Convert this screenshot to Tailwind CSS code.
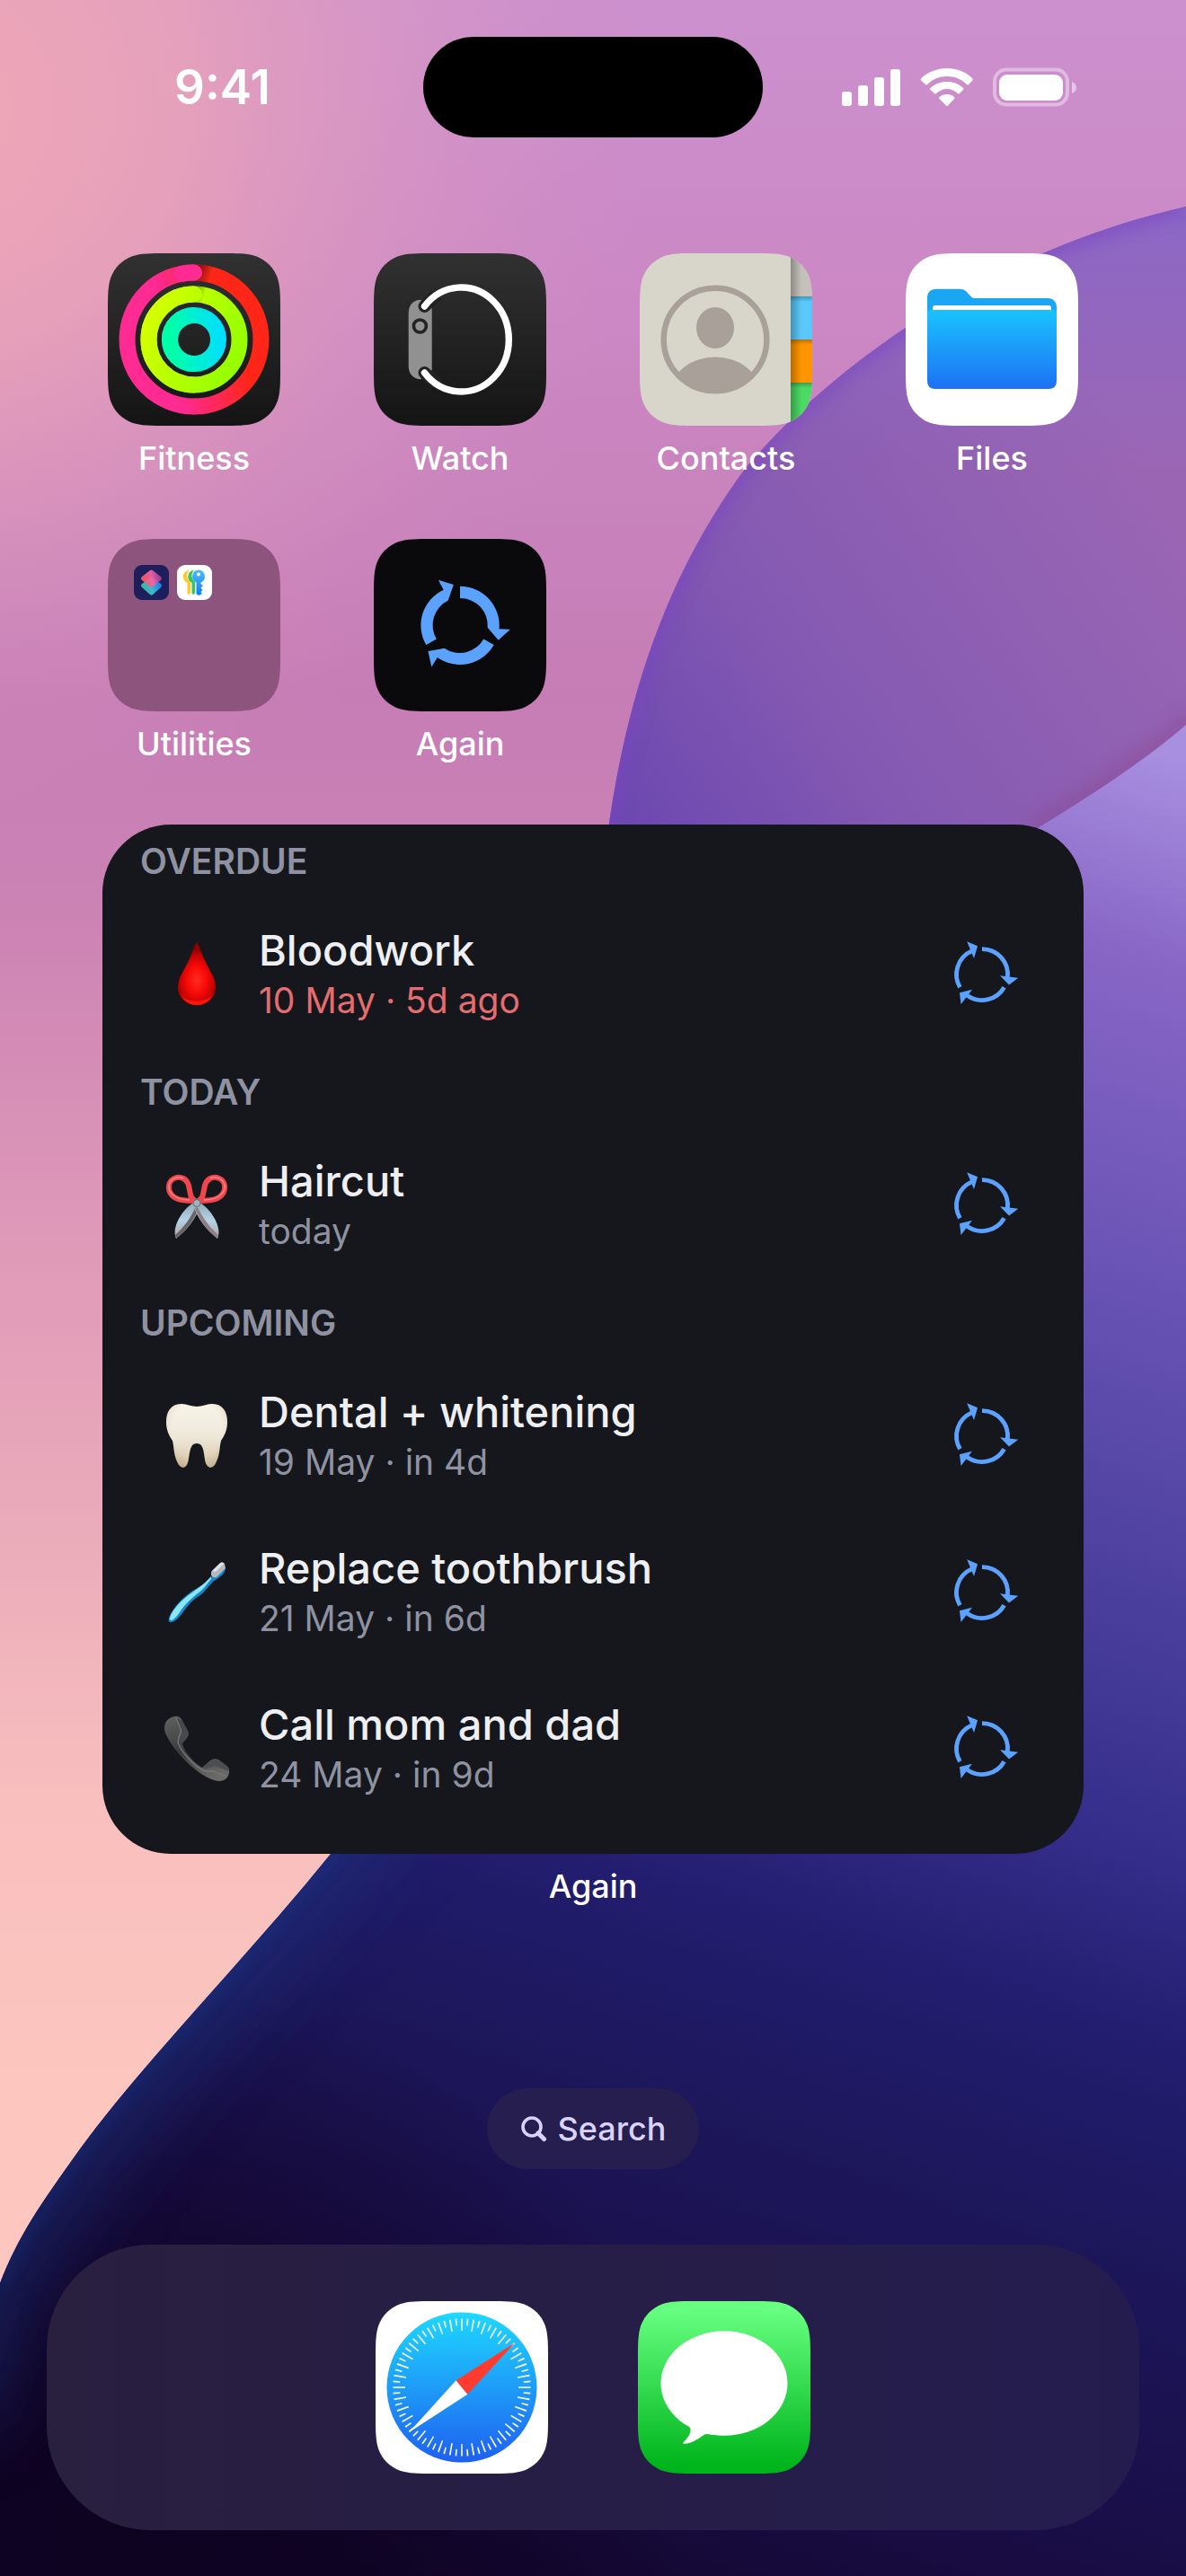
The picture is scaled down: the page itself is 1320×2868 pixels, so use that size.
<!DOCTYPE html>
<html lang="en">
<head>
  <meta charset="UTF-8" />
  <meta name="viewport" content="width=device-width, initial-scale=1.0" />
  <title>Home Screen</title>
  <script src="https://cdn.jsdelivr.net/npm/@tailwindcss/browser@4"></script>
</head>
<body class="font-['Inter','Liberation_Sans',sans-serif] text-white bg-[#1a1050]">
  <!-- Shared shapes -->
  <svg class="absolute w-0 h-0" aria-hidden="true">
    <defs>
      <clipPath id="squircle">
        <path d="M65.7 0H126.3C145.2 0 154.7 0 164.8 3.2C176 7.3 184.7 16 188.8 27.2C192 37.3 192 46.8 192 65.7V126.3C192 145.2 192 154.7 188.8 164.8C184.7 176 176 184.7 164.8 188.8C154.7 192 145.2 192 126.3 192H65.7C46.8 192 37.3 192 27.2 188.8C16 184.7 7.3 176 3.2 164.8C0 154.7 0 145.2 0 126.3V65.7C0 46.8 0 37.3 3.2 27.2C7.3 16 16 7.3 27.2 3.2C37.3 0 46.8 0 65.7 0Z" />
      </clipPath>
      <linearGradient id="dark" x1="0" y1="0" x2="0" y2="1">
        <stop offset="0" stop-color="#313131" />
        <stop offset="1" stop-color="#141414" />
      </linearGradient>
      <g id="cycle-part">
        <path d="M0 -28.4A28.4 28.4 0 0 1 28.4 3" fill="none" stroke="#5ba2fe" stroke-width="4.8" />
        <path d="M20 1.2L40.2 3.8L30 11.6Z" fill="#5ba2fe" />
      </g>
      <symbol id="cycle" viewBox="-48 -48 96 96">
        <use href="#cycle-part" />
        <use href="#cycle-part" transform="rotate(120)" />
        <use href="#cycle-part" transform="rotate(240)" />
      </symbol>
    </defs>
  </svg>

  <div class="relative isolate min-h-screen flex flex-col overflow-hidden">
    <!-- Wallpaper -->
    <svg class="absolute inset-0 -z-10 w-full h-full" viewBox="0 0 1320 2868" preserveAspectRatio="none" aria-hidden="true">
      <defs>
        <linearGradient id="sky" x1="0" y1="0" x2="0" y2="1">
          <stop offset="0" stop-color="#cc90ce" />
          <stop offset=".12" stop-color="#cb88c4" />
          <stop offset=".27" stop-color="#c67db5" />
          <stop offset=".35" stop-color="#cb82b4" />
          <stop offset=".48" stop-color="#df99b8" />
          <stop offset=".6" stop-color="#ebacba" />
          <stop offset=".7" stop-color="#f8bfbe" />
          <stop offset=".82" stop-color="#fdc6be" />
        </linearGradient>
        <radialGradient id="glow" gradientUnits="userSpaceOnUse" cx="-80" cy="120" r="800">
          <stop offset="0" stop-color="#f0a8b6" />
          <stop offset=".35" stop-color="#eca5b7" stop-opacity=".8" />
          <stop offset=".7" stop-color="#e09cbe" stop-opacity=".35" />
          <stop offset="1" stop-color="#d890c0" stop-opacity="0" />
        </radialGradient>
        <linearGradient id="orb" gradientUnits="userSpaceOnUse" x1="680" y1="900" x2="1260" y2="500">
          <stop offset="0" stop-color="#6c48b0" />
          <stop offset=".4" stop-color="#855ab2" />
          <stop offset="1" stop-color="#9a66b4" />
        </linearGradient>
        <linearGradient id="orb-top" gradientUnits="userSpaceOnUse" x1="0" y1="230" x2="0" y2="520">
          <stop offset="0" stop-color="#8a68c8" stop-opacity=".9" />
          <stop offset="1" stop-color="#8a68c8" stop-opacity="0" />
        </linearGradient>
        <linearGradient id="body" gradientUnits="userSpaceOnUse" x1="640" y1="2960" x2="1330" y2="850">
          <stop offset="0" stop-color="#12052a" />
          <stop offset=".13" stop-color="#190d45" />
          <stop offset=".27" stop-color="#1c1659" />
          <stop offset=".38" stop-color="#221d6e" />
          <stop offset=".47" stop-color="#342d8a" />
          <stop offset=".6" stop-color="#4c409e" />
          <stop offset=".74" stop-color="#6853b4" />
          <stop offset=".9" stop-color="#8866c6" />
          <stop offset="1" stop-color="#a88fe0" />
        </linearGradient>
        <radialGradient id="shadow" gradientUnits="userSpaceOnUse" cx="150" cy="2820" r="620">
          <stop offset="0" stop-color="#0e0220" stop-opacity=".9" />
          <stop offset=".4" stop-color="#0e0220" stop-opacity=".65" />
          <stop offset="1" stop-color="#0e0220" stop-opacity="0" />
        </radialGradient>
        <filter id="soft" filterUnits="userSpaceOnUse" x="-300" y="1800" width="1400" height="1300"><feGaussianBlur stdDeviation="42" /></filter>
        <filter id="soft-edge" x="-30%" y="-30%" width="160%" height="160%"><feGaussianBlur stdDeviation="9" /></filter>
        <clipPath id="orb-clip"><path d="M1320 230C1080 285 910 425 829 522C735 650 695 790 676 930L900 1200L1320 1200Z" /></clipPath>
        <clipPath id="body-clip"><path d="M1320 807C1270 850 1215 885 1150 925C800 1150 700 1640 368 2064C270 2185 160 2295 88 2394C45 2454 20 2490 0 2542V2868H1320Z" /></clipPath>
      </defs>
      <rect width="1320" height="2868" fill="url(#sky)" />
      <rect width="1320" height="2868" fill="url(#glow)" />
      <g clip-path="url(#orb-clip)">
        <rect x="600" y="200" width="720" height="1000" fill="url(#orb)" />
        <rect x="600" y="200" width="720" height="400" fill="url(#orb-top)" />
        <path d="M1320 230C1080 285 910 425 829 522C735 650 695 790 676 930" fill="none" stroke="#7c44c4" stroke-width="14" opacity=".75" filter="url(#soft-edge)" />
        <path d="M1330 800C1270 850 1215 885 1150 925" fill="none" stroke="#8c4890" stroke-width="26" opacity=".45" filter="url(#soft-edge)" />
      </g>
      <g clip-path="url(#body-clip)">
        <rect y="800" width="1320" height="2068" fill="url(#body)" />
        <rect y="2100" width="900" height="768" fill="url(#shadow)" />
        <path d="M460 1950L368 2064C270 2185 160 2295 88 2394C45 2454 20 2490 -10 2542L-60 2700" fill="none" stroke="#1d357f" stroke-width="80" opacity=".6" filter="url(#soft)" />
        <path d="M420 2000L368 2064C270 2185 160 2295 88 2394C45 2454 20 2490 0 2542" fill="none" stroke="#1f3c92" stroke-width="8" opacity=".55" filter="url(#soft-edge)" />
      </g>
    </svg>

    <!-- Status bar -->
    <header class="grid grid-cols-[1fr_auto_1fr] items-center pt-[41px]">
      <time class="pl-[194px] text-[53px] leading-[60px] font-semibold">9:41</time>
      <div class="w-[378px] h-[112px] rounded-full bg-black"></div>
      <svg class="justify-self-end mr-[122px] w-[261px] h-[44px]" viewBox="0 0 261 44" fill="#fff" role="img" aria-label="Signal, Wi-Fi, battery full">
        <rect x="0" y="27" width="11" height="16" rx="3" />
        <rect x="18" y="20" width="11" height="23" rx="3" />
        <rect x="36" y="11" width="11" height="32" rx="3" />
        <rect x="54" y="2" width="11" height="41" rx="3" />
        <path d="M117 1C128 1 138 5 145 12Q146.500 13.500 145 15L141 19Q140 20 139 19C133 13 125 10 117 10C109 10 101 13 95 19Q94 20 93 19L88.500 15Q87 13.500 88.500 12C96 5 106 1 117 1Z" />
        <path d="M117 16C124 16 130 18.500 135 23Q136 24 135 25L131 29Q130 30 129 29C125.500 26 121.500 24 117 24C112.500 24 108.500 26 105 29Q104 30 103 29L98.500 25Q97.500 24 98.500 23C103.500 18.500 110 16 117 16Z" />
        <path d="M117 30C120.500 30 123 31 125 33Q126 34 125 35L118 42.500Q117 43.500 116 42.500L108.500 35Q107.500 34 108.500 33C111 31 113.500 30 117 30Z" />
        <rect x="170" y="2.500" width="81" height="39" rx="13" fill="none" stroke="#fff" stroke-opacity=".4" stroke-width="4" />
        <rect x="175" y="8" width="71" height="29" rx="9" />
        <path d="M256 16Q261 18 261 22.500T256 29Z" fill-opacity=".5" />
      </svg>
    </header>

    <main class="flex flex-1 flex-col px-[114px] pt-[129px]">
      <!-- App grid -->
      <nav class="grid grid-cols-[repeat(4,192px)] justify-between gap-y-[70px] px-[6px] text-[36px] leading-10 font-medium text-center">
        <a href="#fitness" class="flex flex-col items-center gap-4">
          <svg class="w-[192px] h-[192px]" viewBox="0 0 192 192" aria-hidden="true">
            <defs>
              <linearGradient id="move" gradientUnits="userSpaceOnUse" x1="20" y1="80" x2="160" y2="50">
                <stop offset=".3" stop-color="#ff2a92" /><stop offset=".85" stop-color="#ff2618" />
              </linearGradient>
              <linearGradient id="exercise" gradientUnits="userSpaceOnUse" x1="45" y1="50" x2="150" y2="96">
                <stop offset="0" stop-color="#d9ff00" /><stop offset="1" stop-color="#97ff00" />
              </linearGradient>
              <linearGradient id="stand" gradientUnits="userSpaceOnUse" x1="70" y1="96" x2="128" y2="90">
                <stop offset="0" stop-color="#00ffa8" /><stop offset="1" stop-color="#00deff" />
              </linearGradient>
              <linearGradient id="cap-shade" gradientUnits="userSpaceOnUse" x1="98" y1="0" x2="121" y2="8">
                <stop offset=".2" stop-color="#000" stop-opacity=".6" /><stop offset="1" stop-color="#000" stop-opacity="0" />
              </linearGradient>
            </defs>
            <g clip-path="url(#squircle)"><rect width="192" height="192" fill="url(#dark)" /></g>
            <g fill="none" stroke-width="18" stroke-linecap="round">
              <path d="M96 21.500A74.500 74.500 0 0 1 96 170.500" stroke="url(#move)" />
              <path d="M96 21.500A74.500 74.500 0 0 1 150 45" stroke="#ff2618" stroke-linecap="butt" />
              <path d="M96 21.500A74.500 74.500 0 0 1 122 26" stroke="url(#cap-shade)" stroke-linecap="butt" />
              <path d="M96 170.500A74.500 74.500 0 0 1 96 21.500" stroke="url(#move)" />
              <path d="M82 22.800Q89 21.500 96 21.500" stroke="#ff2a92" />
              <circle cx="96" cy="96" r="50.500" stroke="url(#exercise)" />
              <path d="M96 45.500A50.500 50.500 0 0 1 120 51.500" stroke="url(#cap-shade)" stroke-linecap="butt" />
              <path d="M96 146.500A50.500 50.500 0 0 1 96 45.500" stroke="url(#exercise)" />
              <circle cx="96" cy="96" r="27" stroke="url(#stand)" />
              <path d="M96 69A27 27 0 0 1 118 80.500" stroke="url(#cap-shade)" stroke-linecap="butt" />
              <path d="M96 123A27 27 0 0 1 96 69" stroke="url(#stand)" />
            </g>
          </svg>
          Fitness
        </a>
        <a href="#watch" class="flex flex-col items-center gap-4">
          <svg class="w-[192px] h-[192px]" viewBox="0 0 192 192" aria-hidden="true">
            <g clip-path="url(#squircle)"><rect width="192" height="192" fill="url(#dark)" /></g>
            <path d="M52 51.700C44 52 38.700 58 38.700 66V126C38.700 134 44 140 52 140.300L64.700 130V61Z" fill="#919191" />
            <g fill="none" stroke-linecap="round">
              <path d="M56.500 59A53 58 0 0 1 68 49M56.500 133A53 58 0 0 0 68 143" stroke="#222" stroke-width="14" />
              <path d="M56.500 59A53 58 0 1 1 56.500 133" stroke="#fff" stroke-width="7.400" />
            </g>
            <circle cx="51.400" cy="81" r="7" fill="none" stroke="#232323" stroke-width="3.600" />
          </svg>
          Watch
        </a>
        <a href="#contacts" class="flex flex-col items-center gap-4">
          <svg class="w-[192px] h-[192px]" viewBox="0 0 192 192" aria-hidden="true">
            <defs>
              <clipPath id="face"><circle cx="84" cy="96" r="59" /></clipPath>
              <linearGradient id="tab-x"><stop offset="0" stop-opacity=".28" /><stop offset=".5" stop-opacity="0" /></linearGradient>
              <linearGradient id="tab-y" x1="0" y1="0" x2="0" y2="1"><stop offset="0" stop-opacity=".25" /><stop offset="1" stop-opacity="0" /></linearGradient>
            </defs>
            <g clip-path="url(#squircle)">
              <rect width="192" height="192" fill="#d8d5cb" />
              <rect x="168" width="24" height="48" fill="#c5c1ba" />
              <rect x="168" y="48" width="24" height="48" fill="#5ac8fa" />
              <rect x="168" y="96" width="24" height="48" fill="#ff9500" />
              <rect x="168" y="144" width="24" height="48" fill="#4cd964" />
              <rect x="168" y="48" width="24" height="6" fill="url(#tab-y)" />
              <rect x="168" y="96" width="24" height="6" fill="url(#tab-y)" />
              <rect x="168" y="144" width="24" height="6" fill="url(#tab-y)" />
              <rect x="168" width="24" height="192" fill="url(#tab-x)" />
            </g>
            <circle cx="84" cy="96" r="57.300" fill="none" stroke="#a9a199" stroke-width="6.500" />
            <ellipse cx="84" cy="83" rx="21" ry="23" fill="#a9a199" />
            <ellipse cx="84" cy="152" rx="48" ry="36.500" fill="#a9a199" clip-path="url(#face)" />
          </svg>
          Contacts
        </a>
        <a href="#files" class="flex flex-col items-center gap-4">
          <svg class="w-[192px] h-[192px]" viewBox="0 0 192 192" aria-hidden="true">
            <defs>
              <linearGradient id="folder" x1="0" y1="0" x2="0" y2="1">
                <stop offset="0" stop-color="#1ac3fd" /><stop offset="1" stop-color="#1d71f3" />
              </linearGradient>
            </defs>
            <g clip-path="url(#squircle)"><rect width="192" height="192" fill="#fff" /></g>
            <path d="M24 50C24 43 28 39.700 34 39.700H60C66 39.700 68 43 72 47.500C74 49.700 75 50 78 50H158C164 50 168 54 168 60V80H24Z" fill="#1ba6f4" />
            <path d="M30 64V61Q30 58 33 58H159Q162 58 162 61V64Z" fill="#fff" />
            <path d="M24 66Q24 63 27 63H165Q168 63 168 66V142Q168 151 159 151H33Q24 151 24 142Z" fill="url(#folder)" />
          </svg>
          Files
        </a>
        <a href="#utilities" class="flex flex-col items-center gap-4">
          <svg class="w-[192px] h-[192px]" viewBox="0 0 192 192" aria-hidden="true">
            <defs>
              <linearGradient id="sc-a" x1="0" y1=".6" x2="1" y2=".4"><stop offset="0" stop-color="#ff5a55" /><stop offset=".55" stop-color="#f263a8" /><stop offset="1" stop-color="#8a3a98" /></linearGradient>
              <linearGradient id="sc-b" x1="0" y1=".7" x2="1" y2=".4"><stop offset="0" stop-color="#35b58c" /><stop offset=".5" stop-color="#3fb6d0" /><stop offset="1" stop-color="#107cf4" /></linearGradient>
              <linearGradient id="key" x1="0" y1="0" x2="0" y2="1"><stop offset="0" stop-color="#4fbcf5" /><stop offset="1" stop-color="#0a7cff" /></linearGradient>
            </defs>
            <g clip-path="url(#squircle)"><rect width="192" height="192" fill="#8d547e" /></g>
            <rect x="29" y="29" width="39" height="39" rx="9" fill="#1d1e5b" />
            <path d="M48.500 42.500L59 50Q61 52 59 54L50 62Q48.500 63 47 62L38 54Q36 52 38 50Z" fill="url(#sc-b)" />
            <path d="M47 35Q48.500 34 50 35L59 42Q61 44 59 46L50 53Q48.500 54 47 53L38 46Q36 44 38 42Z" fill="url(#sc-a)" opacity=".93" />
            <rect x="77" y="29" width="39" height="39" rx="9" fill="#fff" />
            <path d="M91 34.500C82 36 82 46 88.500 49V61L90.500 62L92 60V48C87 44 87 38 91 34.500Z" fill="#fbcb2c" />
            <path d="M96 34.500C87.500 36 87.500 46 93.500 49V61L95.500 62L97 60V48C92.500 44 92.500 38 96 34.500Z" fill="#35c75a" />
            <path d="M101 34.500A7.300 7.300 0 0 1 103.500 48.500V50L106 52L103.500 54.500L105.500 57L103.500 59L105 61L101 63L98.500 61V48.500A7.300 7.300 0 0 1 101 34.500ZM101 37.500A2 2 0 1 0 101 41.500A2 2 0 1 0 101 37.500Z" fill="url(#key)" fill-rule="evenodd" />
          </svg>
          Utilities
        </a>
        <a href="#again" class="flex flex-col items-center gap-4">
          <svg class="w-[192px] h-[192px]" viewBox="0 0 192 192" aria-hidden="true">
            <defs>
              <path id="cycle-bold" d="M0 -43.500A43.500 43.500 0 0 1 43.500 4L55.800 4.400L42.700 16.400L30.700 2.400A30.500 30.500 0 0 0 0 -30.300Z" fill="#5ba2fe" />
            </defs>
            <g clip-path="url(#squircle)"><rect width="192" height="192" fill="#0a0a0d" /></g>
            <g transform="translate(96 96.300)">
              <use href="#cycle-bold" />
              <use href="#cycle-bold" transform="rotate(120)" />
              <use href="#cycle-bold" transform="rotate(240)" />
            </g>
          </svg>
          Again
        </a>
      </nav>

      <!-- Again widget -->
      <article class="mt-[70px] flex flex-col gap-[21px] rounded-[76px] bg-[#16171c] pt-[18px] pb-[30px]">
        <section>
          <h2 class="pl-[42px] pb-4 text-[39px] leading-[46px] font-semibold text-[#8e92a1]">OVERDUE</h2>
          <ul>
            <li class="flex h-[174px] items-center pl-[57px] pr-[65px]">
              <svg class="w-24 h-24" viewBox="0 0 96 96" aria-hidden="true">
                <defs>
                  <radialGradient id="blood" gradientUnits="userSpaceOnUse" cx="48" cy="54" r="34" gradientTransform="translate(14 0) scale(.71 1)">
                    <stop offset="0" stop-color="#ff2c22" /><stop offset=".45" stop-color="#f80a08" /><stop offset=".8" stop-color="#c40202" /><stop offset="1" stop-color="#8c0000" />
                  </radialGradient>
                </defs>
                <path d="M48 13Q49.500 13 51 17C54 27 59 37 64 46C67 51 69 56 69 62C69 74 60 82 48 82S27 74 27 62C27 56 29 51 32 46C37 37 42 27 45 17Q46.500 13 48 13Z" fill="url(#blood)" />
                <path d="M30 70C36 80 60 80 66 70C62 78 56 82 48 82S34 78 30 70Z" fill="#ff1408" />
              </svg>
              <div class="ml-[21px] flex-1">
                <h3 class="text-[47px] leading-[58px] font-medium text-[#eeeff3]">Bloodwork</h3>
                <p class="text-[39px] leading-[54px] text-[#e56d6f]">10 May · 5d ago</p>
              </div>
              <button type="button" aria-label="Repeat Bloodwork"><svg class="w-24 h-24"><use href="#cycle" /></svg></button>
            </li>
          </ul>
        </section>
        <section>
          <h2 class="pl-[42px] pb-4 text-[39px] leading-[46px] font-semibold text-[#8e92a1]">TODAY</h2>
          <ul>
            <li class="flex h-[174px] items-center pl-[57px] pr-[65px]">
              <svg class="w-24 h-24" viewBox="0 0 96 96" aria-hidden="true">
                <defs>
                  <linearGradient id="blade" x1="0" y1="0" x2="0" y2="1">
                    <stop offset="0" stop-color="#8fa6b4" /><stop offset=".5" stop-color="#b5d3e6" /><stop offset="1" stop-color="#b0a2a4" />
                  </linearGradient>
                </defs>
                <path d="M46 44L51 50C47 62 38 75 25 85C19 72 33 51 46 44Z" fill="url(#blade)" />
                <path d="M50 51C46 62 38 75 25 85L24 81C34 72 42 61 47 49Z" fill="#6d6466" />
                <path d="M50 44L45 50C49 62 58 75 71 85C77 72 63 51 50 44Z" fill="url(#blade)" />
                <path d="M46 51C50 62 58 75 71 85L72 81C62 72 54 61 49 50Z" fill="#8d7f82" />
                <g fill="none" stroke="#f0474f" stroke-width="6">
                  <path d="M46 43C42 43 38 43 32 42C22 41 16 34 17 26C18 18 27 15 33 18C41 22 39 32 42 39Z" />
                  <path d="M50 43C54 43 58 43 64 42C74 41 80 34 79 26C78 18 69 15 63 18C55 22 57 32 54 39Z" />
                </g>
                <g fill="none" stroke="#ff8585" stroke-width="1.500">
                  <path d="M40 42C24 42 16 34 17 26C18 18 27 15 33 18" />
                  <path d="M56 42C72 42 80 34 79 26C78 18 69 15 63 18" />
                </g>
                <circle cx="48" cy="45.500" r="4" fill="#9fb4c2" stroke="#5c6a75" />
              </svg>
              <div class="ml-[21px] flex-1">
                <h3 class="text-[47px] leading-[58px] font-medium text-[#eeeff3]">Haircut</h3>
                <p class="text-[39px] leading-[54px] text-[#8e92a1]">today</p>
              </div>
              <button type="button" aria-label="Repeat Haircut"><svg class="w-24 h-24"><use href="#cycle" /></svg></button>
            </li>
          </ul>
        </section>
        <section>
          <h2 class="pl-[42px] pb-4 text-[39px] leading-[46px] font-semibold text-[#8e92a1]">UPCOMING</h2>
          <ul>
            <li class="flex h-[174px] items-center pl-[57px] pr-[65px]">
              <svg class="w-24 h-24" viewBox="0 0 96 96" aria-hidden="true">
                <defs>
                  <linearGradient id="tooth" x1="0" y1="0" x2="0" y2="1">
                    <stop offset="0" stop-color="#f6f2e6" /><stop offset=".5" stop-color="#eae4d6" /><stop offset="1" stop-color="#d2b994" />
                  </linearGradient>
                  <radialGradient id="tooth-shade" cx=".5" cy=".4" r=".7">
                    <stop offset=".6" stop-color="#fffaf0" stop-opacity=".2" /><stop offset="1" stop-color="#8a7350" stop-opacity=".35" />
                  </radialGradient>
                </defs>
                <path d="M31 12C37 12 41 15 48 15S59 12 65 12C77 12 82 21 82 32C82 41 79 47 75 53C73 61 74 70 68 80Q63 86 59 80C55 73 58 56 48 56S41 73 37 80Q33 86 28 80C22 70 23 61 21 53C17 47 14 41 14 32C14 21 19 12 31 12Z" fill="url(#tooth)" />
                <path d="M31 12C37 12 41 15 48 15S59 12 65 12C77 12 82 21 82 32C82 41 79 47 75 53C73 61 74 70 68 80Q63 86 59 80C55 73 58 56 48 56S41 73 37 80Q33 86 28 80C22 70 23 61 21 53C17 47 14 41 14 32C14 21 19 12 31 12Z" fill="url(#tooth-shade)" />
              </svg>
              <div class="ml-[21px] flex-1">
                <h3 class="text-[47px] leading-[58px] font-medium text-[#eeeff3]">Dental + whitening</h3>
                <p class="text-[39px] leading-[54px] text-[#8e92a1]">19 May · in 4d</p>
              </div>
              <button type="button" aria-label="Repeat Dental + whitening"><svg class="w-24 h-24"><use href="#cycle" /></svg></button>
            </li>
            <li class="flex h-[174px] items-center pl-[57px] pr-[65px]">
              <svg class="w-24 h-24" viewBox="0 0 96 96" aria-hidden="true">
                <path d="M76 24C80 22 81 17 80 20C80 27 74 31 67 35C60 42 58 46 52 51C43 56 39 62 34 68C28 77 22 82 18 81C15 80 17 74 22 67C28 58 34 53 42 47C50 42 56 40 65 30Z" fill="#1387cb" />
                <path d="M64 30C57 38 51 42 43 48C34 54 28 60 22 68C18 74 17 78 19 79C23 79 27 73 31 67C37 59 42 55 49 49C57 44 59 38 64 33Z" fill="#8be6f2" />
                <path d="M64 25L74 15Q77 13 79 16L80 21L70 31Q66 32 64 29Z" fill="#b3b9bf" />
                <path d="M65 24L74 15.500Q76 14 78 16L69 25Z" fill="#e0e4e6" />
              </svg>
              <div class="ml-[21px] flex-1">
                <h3 class="text-[47px] leading-[58px] font-medium text-[#eeeff3]">Replace toothbrush</h3>
                <p class="text-[39px] leading-[54px] text-[#8e92a1]">21 May · in 6d</p>
              </div>
              <button type="button" aria-label="Repeat Replace toothbrush"><svg class="w-24 h-24"><use href="#cycle" /></svg></button>
            </li>
            <li class="flex h-[174px] items-center pl-[57px] pr-[65px]">
              <svg class="w-24 h-24" viewBox="0 0 96 96" aria-hidden="true">
                <defs>
                  <linearGradient id="phone" x1=".2" y1="0" x2=".6" y2="1">
                    <stop offset="0" stop-color="#5d5d5d" /><stop offset=".5" stop-color="#3a3b3c" /><stop offset="1" stop-color="#6a6967" />
                  </linearGradient>
                </defs>
                <path d="M23 12Q28 11 31 15L38 28Q40 32 37 36L32 42C34 51 45 64 54 69L62 62Q66 58 72 60L80 66Q85 69 84 75C82 82 78 84 72 84C52 82 17 47 12 27C12 18 15 14 23 12Z" fill="url(#phone)" />
                <path d="M25 13L30 26Q31 30 28 35L27 41C31 52 46 69 58 73L66 73L82 79" fill="none" stroke="#77787a" stroke-width="1.800" opacity=".8" />
                <path d="M31 16L38 28Q40 32 37 36L32 42L29 38L32 29L26 14Z" fill="#47494b" />
                <path d="M62 62Q66 58 72 60L80 66Q84 69 84 73L68 67L58 70L54 69Z" fill="#4b4e50" />
              </svg>
              <div class="ml-[21px] flex-1">
                <h3 class="text-[47px] leading-[58px] font-medium text-[#eeeff3]">Call mom and dad</h3>
                <p class="text-[39px] leading-[54px] text-[#8e92a1]">24 May · in 9d</p>
              </div>
              <button type="button" aria-label="Repeat Call mom and dad"><svg class="w-24 h-24"><use href="#cycle" /></svg></button>
            </li>
          </ul>
        </section>
      </article>
      <p class="mt-4 text-center text-[36px] leading-10 font-medium">Again</p>

      <!-- Search -->
      <button type="button" class="mt-auto mb-[84px] flex h-[90px] items-center gap-3 self-center rounded-full bg-[#251e4f] px-[37px] text-[36px] leading-10 font-medium text-[#d9d3fd]">
        <svg class="w-[30px] h-[30px]" viewBox="0 0 30 30" fill="none" stroke="currentColor" aria-hidden="true">
          <circle cx="13" cy="13" r="10" stroke-width="3.600" />
          <path d="M20 20L26.500 26.500" stroke-width="5" stroke-linecap="round" />
        </svg>
        Search
      </button>
    </main>

    <!-- Dock -->
    <footer class="mx-[52px] mb-[51px] flex h-[318px] items-center justify-center gap-[100px] rounded-[116px] bg-linear-to-r from-[#291f3f] to-[#241c4e]">
      <a href="#safari" aria-label="Safari">
        <svg class="w-[192px] h-[192px]" viewBox="0 0 192 192" aria-hidden="true">
          <defs>
            <linearGradient id="compass" x1="0" y1="0" x2="0" y2="1">
              <stop offset="0" stop-color="#1ed8ff" /><stop offset="1" stop-color="#1e60f0" />
            </linearGradient>
          </defs>
          <g clip-path="url(#squircle)"><rect width="192" height="192" fill="#fff" /></g>
          <circle cx="96" cy="96" r="83.500" fill="url(#compass)" />
          <circle cx="96" cy="96" r="69.800" fill="none" stroke="#fff" stroke-width="13.600" pathLength="36" stroke-dasharray=".13 .87" stroke-dashoffset=".065" />
          <circle cx="96" cy="96" r="72.800" fill="none" stroke="#fff" stroke-width="7.700" pathLength="36" stroke-dasharray=".13 .87" stroke-dashoffset=".565" />
          <path d="M155.500 46L89.500 88.300L102.300 103.700Z" fill="#ff3b30" />
          <path d="M37.300 146L89.500 88.300L102.300 103.700Z" fill="#fff" />
        </svg>
      </a>
      <a href="#messages" aria-label="Messages">
        <svg class="w-[192px] h-[192px]" viewBox="0 0 192 192" aria-hidden="true">
          <defs>
            <linearGradient id="bubble" x1="0" y1="0" x2="0" y2="1">
              <stop offset=".05" stop-color="#66ff80" /><stop offset=".95" stop-color="#00b51c" />
            </linearGradient>
          </defs>
          <g clip-path="url(#squircle)"><rect width="192" height="192" fill="url(#bubble)" /></g>
          <ellipse cx="96" cy="91.500" rx="70.500" ry="58.300" fill="#fff" />
          <path d="M54 137C61 141 60 148 51 156.500Q49 159 52 159C62 158 70 151 74 148.500Q76 147.500 84 149L86 125Z" fill="#fff" />
        </svg>
      </a>
    </footer>
  </div>
</body>
</html>
